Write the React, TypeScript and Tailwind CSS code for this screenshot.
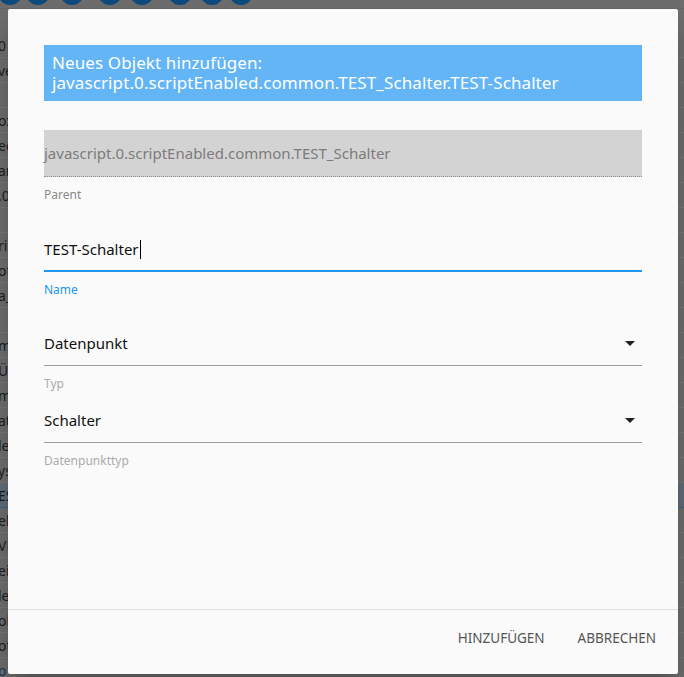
import React from 'react';

const rows = ['0', 've', '', 'ox', 'ec', 'an', '.0', '', 'ri', 'ot', 'a_', '', 'm', 'Ü', 'm', 'at', 'le', 'ys', 'ES', 'el', 'VE', 'ei', 'le', 'ob', 'ot', 'o'];
const circles = [10, 38, 72, 110, 142, 180, 212, 241];

const ArrowDrop: React.FC = () => (
  <svg width="24" height="24" viewBox="0 0 24 24" className="text-[#212121]">
    <path d="M7 10l5 5 5-5z" fill="currentColor" />
  </svg>
);

const App: React.FC = () => {
  return (
    <div className="relative w-[684px] h-[677px] overflow-hidden bg-[#6d6d6d] font-['Noto_Sans',sans-serif]">
      {/* page behind the modal, dimmed */}
      <div className="flex h-[9px] items-end border-b border-[#666]">
        {circles.map((x, i) => (
          <div
            key={i}
            className="absolute top-[-19px] w-6 h-6 rounded-full bg-[#0e4a7c]"
            style={{ left: x - 12 }}
          />
        ))}
      </div>
      <div className="pt-[24px]">
        {rows.map((t, i) => (
          <div
            key={i}
            className={`h-[25px] flex items-center border-b text-[14px] ${
              i === 18 ? 'bg-[#5f6c78] border-[#3d6285] text-[#1c1c1c]' : 'border-[#777] text-[#1e1e1e]'
            } ${i === 25 ? 'text-[#133c66]' : ''}`}
          >
            <span className="-ml-[2px]">{t}</span>
          </div>
        ))}
      </div>

      {/* dialog */}
      <div className="absolute left-[8px] top-[9px] w-[670px] h-[665px] bg-[#fafafa] rounded-[2px] shadow-[0_11px_15px_-7px_rgba(0,0,0,0.2),0_24px_38px_3px_rgba(0,0,0,0.14)] flex flex-col">
        <div className="flex-1 px-9 pt-9">
          <div className="bg-[#64b5f6] text-white px-2 py-2 text-[17px] leading-[20px] tracking-[0.1px]">
            Neues Objekt hinzufügen:
            <br />
            javascript.0.scriptEnabled.common.TEST_Schalter.TEST-Schalter
          </div>

          <div className="mt-[29px] h-[47px] bg-[#d3d3d3] border-b border-dotted border-[#8a8a8a] flex items-center text-[15px] text-[#7c7c7c]">
            javascript.0.scriptEnabled.common.TEST_Schalter
          </div>
          <div className="mt-[10px] text-[12px] leading-[16px] text-[#8a8a8a]">Parent</div>

          <div className="mt-[36px] pb-[11px] border-b-2 border-[#2196f3] flex items-center text-[15px] leading-[20px] text-[#111]">
            TEST-Schalter
            <span className="ml-[1px] w-px h-[19px] bg-black" />
          </div>
          <div className="mt-[10px] text-[12px] leading-[16px] text-[#2196f3]">Name</div>

          <div className="mt-[35px] pb-[12px] border-b border-[#9e9e9e] flex items-center justify-between h-[33px] text-[15px] leading-[20px] text-[#111]">
            <span>Datenpunkt</span>
            <ArrowDrop />
          </div>
          <div className="mt-[10px] text-[12px] leading-[16px] text-[#ababab]">Typ</div>

          <div className="mt-[18px] pb-[12px] border-b border-[#9e9e9e] flex items-center justify-between h-[33px] text-[15px] leading-[20px] text-[#111]">
            <span>Schalter</span>
            <ArrowDrop />
          </div>
          <div className="mt-[10px] text-[12px] leading-[16px] text-[#ababab]">Datenpunkttyp</div>
        </div>

        <div className="h-[65px] border-t border-[#e0e0e0] flex items-start justify-end pt-[10px] pr-[14px] gap-[17px]">
          <button className="h-9 px-2 text-[13.5px] uppercase text-[#555]">Hinzufügen</button>
          <button className="h-9 px-2 text-[13.5px] uppercase text-[#555]">Abbrechen</button>
        </div>
      </div>
    </div>
  );
};

export default App;
